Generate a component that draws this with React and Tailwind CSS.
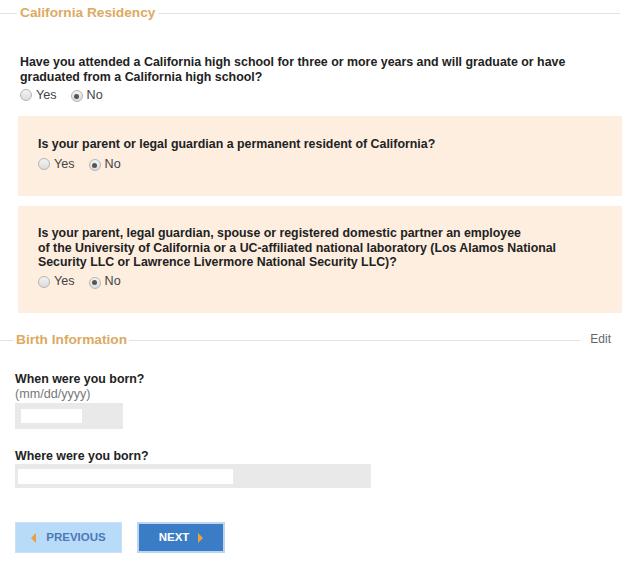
import React from "react";

function Radio({ checked }) {
  return (
    <span className="inline-flex h-[12px] w-[12px] items-center justify-center rounded-full border border-[#b5b5b5] bg-[linear-gradient(#f3f3f3,#dcdcdc)]">
      {checked && <span className="h-[5px] w-[5px] rounded-full bg-[#555]" />}
    </span>
  );
}

function YesNo() {
  return (
    <div className="flex h-[16px] items-center text-[12.6px] text-[#444]">
      <Radio />
      <span className="ml-[4px]">Yes</span>
      <span className="ml-[14px]"><Radio checked /></span>
      <span className="ml-[4px]">No</span>
    </div>
  );
}

export default function App() {
  return (
    <div className="relative h-[567px] w-[640px] overflow-hidden bg-white font-['Liberation_Sans',Arial,sans-serif] text-[#222]">
      {/* California Residency header */}
      <div className="flex h-[26px] items-center pr-[20px]">
        <div className="h-px w-[17px] bg-[#e3e3e3]" />
        <div className="px-[3px] text-[13.7px] font-bold text-[#dcaa62]">California Residency</div>
        <div className="h-px flex-1 bg-[#e3e3e3]" />
      </div>

      <div className="mt-[29px] pl-[20px]">
        <div className="text-[12.4px] font-bold leading-[15px]">
          Have you attended a California high school for three or more years and will graduate or have
          <br />
          graduated from a California high school?
        </div>
        <div className="mt-[2px]">
          <YesNo />
        </div>
      </div>

      <div className="ml-[18px] mt-[13px] h-[80px] w-[604px] bg-[#fdeee0] pl-[20px] pt-[21px]">
        <div className="text-[12.4px] font-bold leading-[15px]">
          Is your parent or legal guardian a permanent resident of California?
        </div>
        <div className="mt-[4px]">
          <YesNo />
        </div>
      </div>

      <div className="ml-[18px] mt-[10px] h-[107px] w-[604px] bg-[#fdeee0] pl-[20px] pt-[20px]">
        <div className="text-[12.35px] font-bold leading-[14.5px]">
          Is your parent, legal guardian, spouse or registered domestic partner an employee
          <br />
          of the University of California or a UC-affiliated national laboratory (Los Alamos National
          <br />
          Security LLC or Lawrence Livermore National Security LLC)?
        </div>
        <div className="mt-[4px]">
          <YesNo />
        </div>
      </div>

      {/* Birth Information header */}
      <div className="mt-[16px] flex h-[22px] items-center">
        <div className="h-px w-[14px] bg-[#e3e3e3]" />
        <div className="px-[2px] text-[13.7px] font-bold text-[#dcaa62]">Birth Information</div>
        <div className="h-px flex-1 bg-[#e3e3e3]" />
        <div className="-mt-[3px] px-[10px] pr-[29px] text-[12px] text-[#666]">Edit</div>
      </div>

      <div className="pl-[15px]">
        <div className="mt-[21px] text-[12.4px] font-bold leading-[15px]">When were you born?</div>
        <div className="text-[12.6px] leading-[15px] text-[#777]">(mm/dd/yyyy)</div>
        <div className="mt-[1px] flex h-[26px] w-[108px] items-center bg-[#e9e9e9] pl-[6px]">
          <div className="h-[14px] w-[61px] bg-white" />
        </div>

        <div className="mt-[20px] text-[12.4px] font-bold leading-[15px]">Where were you born?</div>
        <div className="flex h-[24px] w-[356px] items-center bg-[#e9e9e9] pl-[3px]">
          <div className="h-[15px] w-[215px] bg-white" />
        </div>

        <div className="mt-[34px] flex gap-[15px]">
          <div className="flex h-[31px] w-[107px] items-center justify-center gap-[10px] border border-[#c9e2f7] bg-[#b8dbfa] text-[11.5px] font-bold text-[#4b79b5]">
            <span className="h-0 w-0 border-y-[5px] border-r-[5px] border-y-transparent border-r-[#e7a23a]" />
            PREVIOUS
          </div>
          <div className="flex h-[31px] w-[88px] items-center justify-center gap-[9px] border-2 border-[#bcd6f0] bg-[#3b7cc6] text-[11.5px] font-bold text-white">
            NEXT
            <span className="h-0 w-0 border-y-[5px] border-l-[5px] border-y-transparent border-l-[#e7a23a]" />
          </div>
        </div>
      </div>
    </div>
  );
}
